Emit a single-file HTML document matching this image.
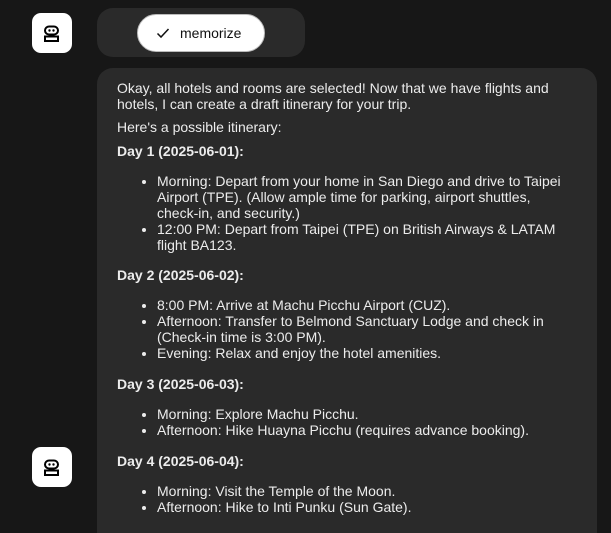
<!DOCTYPE html>
<html><head><meta charset="utf-8"><style>
html,body{margin:0;padding:0;background:#171717;width:611px;height:533px;overflow:hidden;font-family:"Liberation Sans",Arial,sans-serif;color:#ececec}
.av{position:absolute;left:32px;width:40px;height:40px;background:#fff;border-radius:9px}
.b1{position:absolute;left:97px;top:8px;width:208px;height:49px;background:#2a2a2a;border-radius:16px}
.pill{position:absolute;left:40px;top:6px;width:128px;height:38px;background:#fff;border:1px solid #bbb;border-radius:19px;color:#111;font-size:14px;line-height:36px;box-sizing:border-box}
.pill span{position:absolute;left:42px;top:0}
.b2{position:absolute;left:97px;top:68px;width:500px;height:465px;overflow:hidden;background:#2a2a2a;border-radius:16px 16px 0 0;box-sizing:border-box;padding:12px 30px 0 20px;font-size:14px;line-height:16px}
p{margin:0}
h4{margin:0;font-size:14px;line-height:16px;font-weight:bold}
ul{margin:14px 0 14px 0;padding-left:40px}
</style></head><body>
<div class="av" style="top:13px"><svg width="40" height="40" viewBox="0 0 40 40"><rect x="13" y="13.5" width="13" height="8" rx="4" fill="none" stroke="#000" stroke-width="2"/><circle cx="17.5" cy="17.5" r="1.2" fill="#000"/><circle cx="21.5" cy="17.5" r="1.2" fill="#000"/><rect x="13" y="23.5" width="13" height="4.5" fill="none" stroke="#000" stroke-width="2"/></svg></div>
<div class="av" style="top:447px"><svg width="40" height="40" viewBox="0 0 40 40"><rect x="13" y="13.5" width="13" height="8" rx="4" fill="none" stroke="#000" stroke-width="2"/><circle cx="17.5" cy="17.5" r="1.2" fill="#000"/><circle cx="21.5" cy="17.5" r="1.2" fill="#000"/><rect x="13" y="23.5" width="13" height="4.5" fill="none" stroke="#000" stroke-width="2"/></svg></div>
<div class="b1"><div class="pill"><svg style="position:absolute;left:18px;top:11px" width="14" height="14" viewBox="0 0 14 14"><path d="M1.5 7.5 L5 11 L12.5 3" fill="none" stroke="#111" stroke-width="1.5"/></svg><span>memorize</span></div></div>
<div class="b2">
<p>Okay, all hotels and rooms are selected! Now that we have flights and hotels, I can create a draft itinerary for your trip.</p>
<p style="margin-top:7px">Here's a possible itinerary:</p>
<h4 style="margin-top:8px">Day 1 (2025-06-01):</h4>
<ul><li>Morning: Depart from your home in San Diego and drive to Taipei Airport (TPE). (Allow ample time for parking, airport shuttles, check-in, and security.)</li><li>12:00 PM: Depart from Taipei (TPE) on British Airways &amp; LATAM flight BA123.</li></ul>
<h4>Day 2 (2025-06-02):</h4>
<ul><li>8:00 PM: Arrive at Machu Picchu Airport (CUZ).</li><li>Afternoon: Transfer to Belmond Sanctuary Lodge and check in (Check-in time is 3:00 PM).</li><li>Evening: Relax and enjoy the hotel amenities.</li></ul>
<h4 style="margin-top:15px">Day 3 (2025-06-03):</h4>
<ul><li>Morning: Explore Machu Picchu.</li><li>Afternoon: Hike Huayna Picchu (requires advance booking).</li></ul>
<h4 style="margin-top:15px">Day 4 (2025-06-04):</h4>
<ul><li>Morning: Visit the Temple of the Moon.</li><li>Afternoon: Hike to Inti Punku (Sun Gate).</li></ul>
</div>
</body></html>
